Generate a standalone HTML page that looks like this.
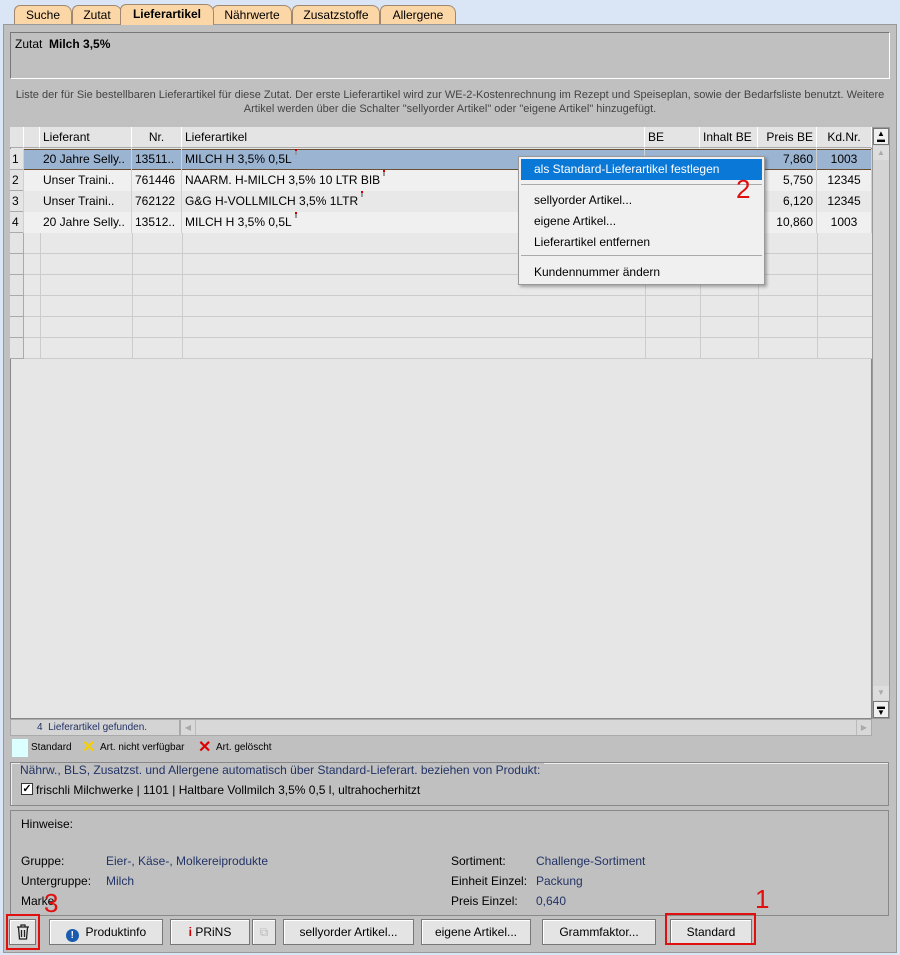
<!DOCTYPE html>
<html><head><meta charset="utf-8"><style>
*{box-sizing:border-box;margin:0;padding:0}
body{width:900px;height:955px;background:#dae6f6;font-family:"Liberation Sans",sans-serif;font-size:12px;color:#000;position:relative;overflow:hidden}
.a{position:absolute}
.tab{position:absolute;top:5px;height:20px;background:#fbd6a6;border:1px solid #a08870;border-bottom:none;border-radius:6px 8px 0 0;text-align:center;line-height:19px;font-size:12px}
.panel{left:3px;top:24px;width:894px;height:929px;background:#c0c0c0;border:1px solid #999}
.cell{position:absolute;height:21px;line-height:21px;padding:0 3px;white-space:nowrap;overflow:hidden;border-right:1px solid #d0d0d0}
.hdr{background:#e4e4e4;border-right:1px solid #fff;border-bottom:1px solid #aaa}
.btn{position:absolute;top:919px;height:26px;background:#e4e4e4;border:1px solid #777;box-shadow:inset 1px 1px 0 #fff;text-align:center;line-height:24px;font-size:12px}
.lbl{position:absolute;font-size:12px}
.v{color:#223366}
.red{position:absolute;color:#e01010;font-size:26px;font-family:"Liberation Sans",sans-serif}
.ex{display:inline-block;width:2px;height:6px;background:#999;border-top:2px solid #c00;vertical-align:8px;margin-left:3px}
</style></head><body>
<div class="tab" style="left:14px;width:58px">Suche</div>
<div class="tab" style="left:72px;width:50px">Zutat</div>
<div class="tab" style="left:292px;width:88px">Zusatzstoffe</div>
<div class="tab" style="left:380px;width:76px">Allergene</div>
<div class="tab" style="left:212px;width:80px">Nährwerte</div>
<div class="tab" style="left:120px;width:94px;font-weight:bold;top:4px;height:21px;z-index:2">Lieferartikel</div>
<div class="a panel"></div>
<div class="a" style="left:10px;top:32px;width:880px;height:47px;border:1px solid #777;border-right-color:#fff;border-bottom-color:#fff"></div>
<div class="lbl" style="left:15px;top:37px">Zutat&nbsp; <b>Milch 3,5%</b></div>
<div class="a" style="left:10px;top:88px;width:880px;text-align:center;font-size:11px;color:#444;line-height:14px">Liste der für Sie bestellbaren Lieferartikel für diese Zutat. Der erste Lieferartikel wird zur WE-2-Kostenrechnung im Rezept und Speiseplan, sowie der Bedarfsliste benutzt. Weitere<br>Artikel werden über die Schalter "sellyorder Artikel" oder "eigene Artikel" hinzugefügt.</div>
<!-- table -->
<div class="a" style="left:10px;top:127px;width:862px;height:592px;background:#e6e6e6;border:1px solid #888"></div>
<div class="a" style="left:10px;top:127px;width:862px;height:22px">
<div class="cell hdr" style="left:0;width:14px"></div>
<div class="cell hdr" style="left:14px;width:16px"></div>
<div class="cell hdr" style="left:30px;width:92px">Lieferant</div>
<div class="cell hdr" style="left:122px;width:50px;text-align:center">Nr.</div>
<div class="cell hdr" style="left:172px;width:463px">Lieferartikel</div>
<div class="cell hdr" style="left:635px;width:55px">BE</div>
<div class="cell hdr" style="left:690px;width:58px">Inhalt BE</div>
<div class="cell hdr" style="left:748px;width:59px;text-align:right">Preis BE</div>
<div class="cell hdr" style="left:807px;width:55px;text-align:center">Kd.Nr.</div>
</div>
<div class="a" style="left:10px;top:149px;width:862px">
<div class="a" style="left:0;top:21px;width:862px;height:21px;background:#f0f0f0"></div>
<div class="a" style="left:0;top:42px;width:862px;height:21px;background:#e8e8e8"></div>
<div class="a" style="left:0;top:63px;width:862px;height:21px;background:#f0f0f0"></div>
<div class="a" style="left:0;top:84px;width:862px;height:126px;background:repeating-linear-gradient(#e8e8e8 0 20px,#ccc 20px 21px)"></div>
<div class="a" style="left:0;top:0;width:14px;height:210px;background:repeating-linear-gradient(#e4e4e4 0 20px,#aaa 20px 21px);border-right:1px solid #aaa"></div>
<div class="a" style="left:14px;top:0;width:848px;height:21px;background:#9bb4d2;border-top:1px solid #6a5030;border-bottom:1px solid #6a5030"></div>
</div>
<div class="a" style="left:10px;top:149px;width:862px">
<div class="cell" style="left:0;top:0;width:14px;padding:0 2px">1</div><div class="cell" style="left:30px;top:0;width:92px">20 Jahre Selly..</div><div class="cell" style="left:122px;top:0;width:50px">13511..</div><div class="cell" style="left:172px;top:0;width:463px">MILCH H 3,5% 0,5L<span class="ex"></span></div><div class="cell" style="left:748px;top:0;width:59px;text-align:right">7,860</div><div class="cell" style="left:807px;top:0;width:55px;text-align:center">1003</div>
<div class="cell" style="left:0;top:21px;width:14px;padding:0 2px">2</div><div class="cell" style="left:30px;top:21px;width:92px">Unser Traini..</div><div class="cell" style="left:122px;top:21px;width:50px">761446</div><div class="cell" style="left:172px;top:21px;width:463px">NAARM. H-MILCH 3,5% 10 LTR BIB<span class="ex"></span></div><div class="cell" style="left:748px;top:21px;width:59px;text-align:right">5,750</div><div class="cell" style="left:807px;top:21px;width:55px;text-align:center">12345</div>
<div class="cell" style="left:0;top:42px;width:14px;padding:0 2px">3</div><div class="cell" style="left:30px;top:42px;width:92px">Unser Traini..</div><div class="cell" style="left:122px;top:42px;width:50px">762122</div><div class="cell" style="left:172px;top:42px;width:463px">G&amp;G H-VOLLMILCH 3,5% 1LTR<span class="ex"></span></div><div class="cell" style="left:748px;top:42px;width:59px;text-align:right">6,120</div><div class="cell" style="left:807px;top:42px;width:55px;text-align:center">12345</div>
<div class="cell" style="left:0;top:63px;width:14px;padding:0 2px">4</div><div class="cell" style="left:30px;top:63px;width:92px">20 Jahre Selly..</div><div class="cell" style="left:122px;top:63px;width:50px">13512..</div><div class="cell" style="left:172px;top:63px;width:463px">MILCH H 3,5% 0,5L<span class="ex"></span></div><div class="cell" style="left:748px;top:63px;width:59px;text-align:right">10,860</div><div class="cell" style="left:807px;top:63px;width:55px;text-align:center">1003</div>
</div>
<div class="a" style="left:40px;top:233px;width:1px;height:126px;background:#ccc"></div>
<div class="a" style="left:132px;top:233px;width:1px;height:126px;background:#ccc"></div>
<div class="a" style="left:182px;top:233px;width:1px;height:126px;background:#ccc"></div>
<div class="a" style="left:645px;top:233px;width:1px;height:126px;background:#ccc"></div>
<div class="a" style="left:700px;top:233px;width:1px;height:126px;background:#ccc"></div>
<div class="a" style="left:758px;top:233px;width:1px;height:126px;background:#ccc"></div>
<div class="a" style="left:817px;top:233px;width:1px;height:126px;background:#ccc"></div>
<!-- vscroll -->
<div class="a" style="left:872px;top:127px;width:18px;height:592px;background:#d4d4d4;border:1px solid #999"></div>
<div class="a" style="left:873px;top:128px;width:16px;height:17px;background:#f0f0f0;border:1px solid #777;text-align:center;font-size:8px;line-height:6px;padding-top:2px">▲<br>▬</div>
<div class="a" style="left:873px;top:146px;width:16px;height:14px;background:#ddd;color:#aaa;text-align:center;font-size:8px;line-height:14px">▲</div>
<div class="a" style="left:873px;top:686px;width:16px;height:14px;background:#ddd;color:#aaa;text-align:center;font-size:8px;line-height:14px">▼</div>
<div class="a" style="left:873px;top:701px;width:16px;height:17px;background:#f0f0f0;border:1px solid #777;text-align:center;font-size:8px;line-height:6px;padding-top:2px">▬<br>▼</div>
<!-- status bar -->
<div class="a" style="left:10px;top:719px;width:170px;height:17px;background:#d4d4d4;border:1px solid #aaa;font-size:10px;color:#223366;line-height:15px;padding-left:26px">4&nbsp; Lieferartikel gefunden.</div>
<div class="a" style="left:180px;top:719px;width:692px;height:17px;background:#d8d8d8;border:1px solid #aaa"></div>
<div class="a" style="left:181px;top:720px;width:15px;height:15px;border-right:1px solid #bbb;color:#aaa;font-size:8px;line-height:15px;text-align:center">◀</div>
<div class="a" style="left:856px;top:720px;width:15px;height:15px;border-left:1px solid #bbb;color:#aaa;font-size:8px;line-height:15px;text-align:center">▶</div>
<!-- legend -->
<div class="a" style="left:12px;top:739px;width:16px;height:18px;background:#dcffff"></div>
<div class="lbl" style="left:31px;top:742px;font-size:10px">Standard</div>
<div class="lbl" style="left:82px;top:737px;font-size:16px;color:#f5d000;font-weight:bold">✕</div>
<div class="lbl" style="left:100px;top:742px;font-size:10px">Art. nicht verfügbar</div>
<div class="lbl" style="left:198px;top:737px;font-size:16px;color:#d00;font-weight:bold">✕</div>
<div class="lbl" style="left:216px;top:742px;font-size:10px">Art. gelöscht</div>
<!-- group -->
<div class="a" style="left:10px;top:762px;width:879px;height:44px;border:1px solid #888;box-shadow:1px 1px 0 #eee inset"></div>
<div class="lbl v" style="left:20px;top:763px;background:#c0c0c0;padding-right:4px">Nährw., BLS, Zusatzst. und Allergene automatisch über Standard-Lieferart. beziehen von Produkt:</div>
<div class="a" style="left:21px;top:783px;width:12px;height:12px;background:#fff;border:1px solid #333;font-size:11px;line-height:10px;text-align:center;font-weight:bold">✓</div>
<div class="lbl" style="left:36px;top:783px">frischli Milchwerke | 1101 | Haltbare Vollmilch 3,5% 0,5 l, ultrahocherhitzt</div>
<!-- hinweise -->
<div class="a" style="left:10px;top:810px;width:879px;height:106px;border:1px solid #888"></div>
<div class="lbl" style="left:21px;top:817px">Hinweise:</div>
<div class="lbl" style="left:21px;top:854px">Gruppe:</div><div class="lbl v" style="left:106px;top:854px">Eier-, Käse-, Molkereiprodukte</div>
<div class="lbl" style="left:21px;top:874px">Untergruppe:</div><div class="lbl v" style="left:106px;top:874px">Milch</div>
<div class="lbl" style="left:21px;top:894px">Marke</div>
<div class="lbl" style="left:451px;top:854px">Sortiment:</div><div class="lbl v" style="left:536px;top:854px">Challenge-Sortiment</div>
<div class="lbl" style="left:451px;top:874px">Einheit Einzel:</div><div class="lbl v" style="left:536px;top:874px">Packung</div>
<div class="lbl" style="left:451px;top:894px">Preis Einzel:</div><div class="lbl v" style="left:536px;top:894px">0,640</div>
<!-- buttons -->
<div class="btn" style="left:9px;width:27px"><svg width="14" height="16" viewBox="0 0 14 16" style="margin-top:4px"><path d="M1 3h12M5 3V1h4v2M2.5 3.5l1 11.5h7l1-11.5M5.5 6v7M8.5 6v7" fill="none" stroke="#222" stroke-width="1.3"/></svg></div>
<div class="a" style="left:6px;top:914px;width:34px;height:36px;border:2px solid #e01010"></div>
<div class="btn" style="left:49px;width:114px"><span style="display:inline-block;width:13px;height:13px;border-radius:50%;background:#1a5cb0;color:#fff;font-size:10px;line-height:13px;font-weight:bold;vertical-align:-2px">!</span>&nbsp; Produktinfo</div>
<div class="btn" style="left:170px;width:80px"><span style="color:#c00;font-weight:bold">i</span>&nbsp;PRiNS</div>
<div class="btn" style="left:252px;width:24px;color:#bbb">⧉</div>
<div class="btn" style="left:283px;width:131px">sellyorder Artikel...</div>
<div class="btn" style="left:421px;width:110px">eigene Artikel...</div>
<div class="btn" style="left:542px;width:114px">Grammfaktor...</div>
<div class="btn" style="left:670px;width:82px">Standard</div>
<div class="a" style="left:665px;top:913px;width:91px;height:32px;border:2px solid #e01010"></div>
<div class="red" style="left:755px;top:884px">1</div>
<div class="red" style="left:44px;top:888px">3</div>
<!-- context menu -->
<div class="a" style="left:518px;top:156px;width:247px;height:129px;background:#f0f0f0;border:1px solid #999;box-shadow:2px 2px 3px rgba(0,0,0,.3)">
<div class="a" style="left:2px;top:2px;width:241px;height:21px;background:#0a78d7;color:#fff;line-height:21px;padding-left:13px">als Standard-Lieferartikel festlegen</div>
<div class="a" style="left:2px;top:27px;width:241px;height:1px;background:#aaa"></div>
<div class="a" style="left:15px;top:36px">sellyorder Artikel...</div>
<div class="a" style="left:15px;top:57px">eigene Artikel...</div>
<div class="a" style="left:15px;top:78px">Lieferartikel entfernen</div>
<div class="a" style="left:2px;top:98px;width:241px;height:1px;background:#aaa"></div>
<div class="a" style="left:15px;top:108px">Kundennummer ändern</div>
</div>
<div class="red" style="left:736px;top:174px">2</div>
</body></html>
